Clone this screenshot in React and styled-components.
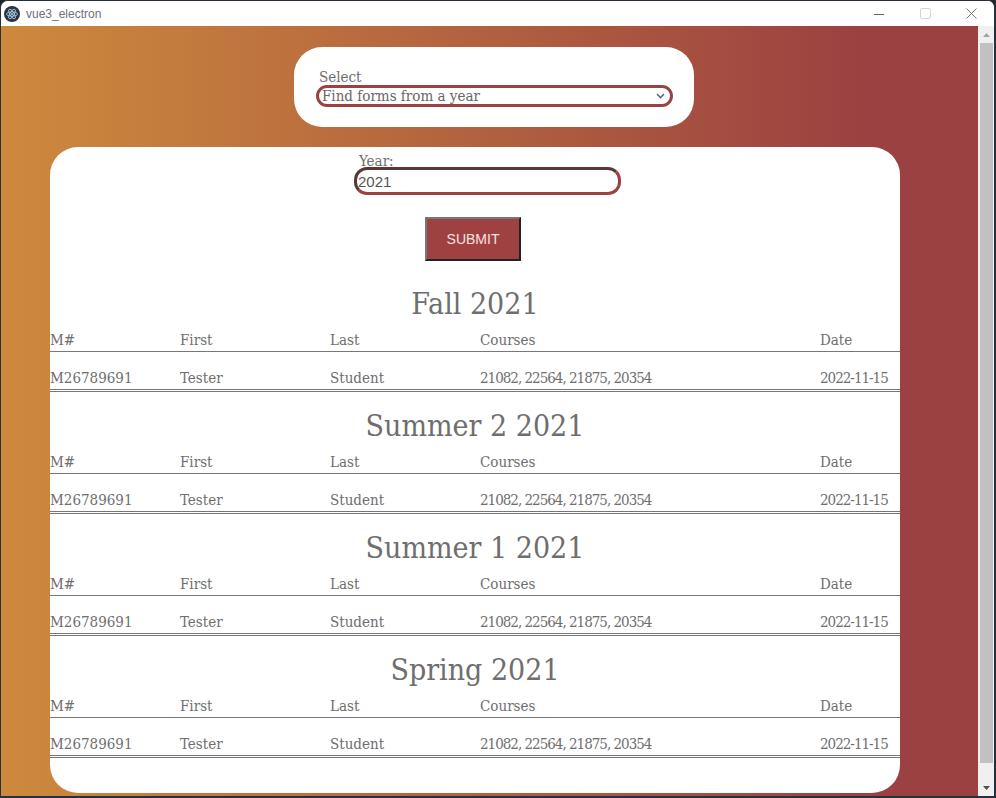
import React from "react";
import styled, { createGlobalStyle } from "styled-components";

const GlobalStyle = createGlobalStyle`
  html, body { margin: 0; padding: 0; width: 100%; height: 100%; overflow: hidden; background: #1f2733; }
  #root { height: 100%; }
  *, *::before, *::after { box-sizing: border-box; }
`;

const SERIF = `"DejaVu Serif Condensed", "DejaVu Serif", "Liberation Serif", serif`;
const TEXT = "#6e6e6e";

const Window = styled.div`
  width: 996px;
  height: 798px;
  display: flex;
  flex-direction: column;
  border: 1px solid #27303d;
  border-right-width: 2px;
  border-bottom-width: 2px;
  border-radius: 8px 8px 0 0;
  overflow: hidden;
  background: #fff;
`;

const TitleBar = styled.div`
  height: 25px;
  flex: none;
  display: flex;
  align-items: center;
  background: #fff;
  padding-left: 3px;
`;

const Title = styled.span`
  margin-left: 6px;
  font-family: "Segoe UI", "Liberation Sans", sans-serif;
  font-size: 12px;
  color: #6f6f78;
`;

const Controls = styled.div`
  margin-left: auto;
  display: flex;
  height: 100%;
`;

const WinButton = styled.div`
  width: 46px;
  height: 100%;
  display: flex;
  align-items: center;
  justify-content: center;
`;

const Body = styled.div`
  flex: 1;
  min-height: 0;
  display: flex;
`;

const Viewport = styled.div`
  flex: 1;
  overflow: hidden;
  background: linear-gradient(to right, #cd8a3d 0%, #9c4141 88%);
  padding-top: 21px;
`;

const Scrollbar = styled.div`
  width: 16px;
  flex: none;
  background: #f0f0f0;
  display: flex;
  flex-direction: column;
`;

const ScrollArrow = styled.div`
  height: 17px;
  flex: none;
  display: flex;
  align-items: center;
  justify-content: center;
  padding-left: 1px;
`;

const Thumb = styled.div`
  height: 720px;
  flex: none;
  margin: 0 1px 0 2px;
  background: #c1c1c1;
`;

const Track = styled.div`
  flex: 1;
`;

const SelectCard = styled.div`
  margin-left: 293px;
  width: 400px;
  height: 80px;
  background: #fff;
  border-radius: 28px;
  padding: 21px 22px 20px;
`;

const FieldLabel = styled.label`
  display: block;
  font-family: ${SERIF};
  font-size: 15px;
  line-height: ${(p) => p.$lh || 17}px;
  color: ${TEXT};
  padding-left: ${(p) => p.$indent || 3}px;
  padding-top: ${(p) => p.$top || 0}px;
`;

const SelectWrap = styled.div`
  position: relative;
  width: 357px;
`;

const Select = styled.select`
  appearance: none;
  -webkit-appearance: none;
  display: block;
  width: 100%;
  height: 22px;
  border: 3px solid #9c4141;
  border-radius: 11px;
  background: #fff;
  font-family: ${SERIF};
  font-size: 15px;
  line-height: 16px;
  color: #666;
  padding: 0 0 0 3px;
  outline: none;
`;

const Chevron = styled.svg`
  position: absolute;
  right: 8px;
  top: 8px;
  pointer-events: none;
`;

const MainCard = styled.div`
  margin: 20px 0 0 49px;
  width: 850px;
  height: 646px;
  background: #fff;
  border-radius: 28px;
  display: flex;
  flex-direction: column;
  align-items: flex-start;
  padding-top: 5px;
`;

const YearBlock = styled.div`
  margin-left: 304px;
  width: 267px;
`;

const YearInput = styled.input`
  display: block;
  width: 267px;
  height: 28px;
  border: 3px solid;
  border-color: #5a3838 #9e4040 #9e4040 #5a3838;
  border-radius: 13px;
  padding: 0 1px;
  font-family: "Liberation Sans", Arial, sans-serif;
  font-size: 15px;
  color: #555;
  background: #fff;
  outline: none;
`;

const SubmitButton = styled.button`
  margin: 22px 0 9px 375px;
  width: 96px;
  height: 44px;
  background: #a04141;
  color: #f5e1e1;
  font-family: "Liberation Sans", Arial, sans-serif;
  font-size: 14px;
  border: 2px solid;
  border-color: #777 #222 #222 #777;
  padding: 0;
`;

const Section = styled.section`
  margin-top: 15px;
  width: 100%;
`;

const SectionTitle = styled.h2`
  margin: 0;
  padding-top: 3px;
  font-family: ${SERIF};
  font-size: 30px;
  line-height: 32px;
  font-weight: normal;
  text-align: center;
  color: ${TEXT};
`;

const Table = styled.table`
  width: 100%;
  table-layout: fixed;
  border-collapse: separate;
  border-spacing: 0;
  font-family: ${SERIF};
  font-size: 15px;
  color: ${TEXT};
`;

const Th = styled.th`
  text-align: left;
  font-weight: normal;
  padding: 11px 0 2px;
  line-height: 18px;
  border-bottom: 1px solid #777;
  white-space: nowrap;
`;

const Td = styled.td`
  padding: 17px 0 2px;
  line-height: 18px;
  border-bottom: 3px double #777;
  white-space: nowrap;
  letter-spacing: ${(p) => (p.$tight ? "-1px" : "normal")};
`;

const sections = ["Fall 2021", "Summer 2 2021", "Summer 1 2021", "Spring 2021"];
const row = {
  id: "M26789691",
  first: "Tester",
  last: "Student",
  courses: "21082, 22564, 21875, 20354",
  date: "2022-11-15",
};

const ElectronIcon = () => (
  <svg width="16" height="16" viewBox="0 0 16 16">
    <circle cx="8" cy="8" r="8" fill="#2f3242" />
    <g fill="none" stroke="#a8dcef" strokeWidth="0.8">
      <ellipse cx="8" cy="8" rx="5.4" ry="2.1" />
      <ellipse cx="8" cy="8" rx="5.4" ry="2.1" transform="rotate(60 8 8)" />
      <ellipse cx="8" cy="8" rx="5.4" ry="2.1" transform="rotate(-60 8 8)" />
    </g>
    <circle cx="8" cy="8" r="1" fill="#a8dcef" />
  </svg>
);

export default function App() {
  return (
    <>
      <GlobalStyle />
      <Window>
        <TitleBar>
          <ElectronIcon />
          <Title>vue3_electron</Title>
          <Controls>
            <WinButton>
              <svg width="10" height="10" viewBox="0 0 10 10">
                <line x1="0" y1="5.5" x2="10" y2="5.5" stroke="#666" strokeWidth="1" />
              </svg>
            </WinButton>
            <WinButton>
              <svg width="11" height="11" viewBox="0 0 11 11">
                <rect x="0.5" y="0.5" width="10" height="10" rx="1.5" fill="none" stroke="#d4d4d4" strokeWidth="1" />
              </svg>
            </WinButton>
            <WinButton>
              <svg width="11" height="11" viewBox="0 0 11 11">
                <path d="M0.5 0.5L10.5 10.5M10.5 0.5L0.5 10.5" stroke="#666" strokeWidth="0.9" />
              </svg>
            </WinButton>
          </Controls>
        </TitleBar>
        <Body>
          <Viewport>
            <SelectCard>
              <FieldLabel htmlFor="mode" $top={1} $lh={16}>Select</FieldLabel>
              <SelectWrap>
                <Select id="mode" defaultValue="year">
                  <option value="year">Find forms from a year</option>
                </Select>
                <Chevron width="9" height="6" viewBox="0 0 9 6">
                  <path d="M1 1l3.5 3.5L8 1" stroke="#666" strokeWidth="1.6" fill="none" />
                </Chevron>
              </SelectWrap>
            </SelectCard>
            <MainCard>
              <YearBlock>
                <FieldLabel htmlFor="year" $top={3} $lh={12} $indent={5}>Year:</FieldLabel>
                <YearInput id="year" defaultValue="2021" />
              </YearBlock>
              <SubmitButton>SUBMIT</SubmitButton>
              {sections.map((name) => (
                <Section key={name}>
                  <SectionTitle>{name}</SectionTitle>
                  <Table>
                    <colgroup>
                      <col style={{ width: 130 }} />
                      <col style={{ width: 150 }} />
                      <col style={{ width: 150 }} />
                      <col style={{ width: 340 }} />
                      <col />
                    </colgroup>
                    <thead>
                      <tr>
                        <Th>M#</Th>
                        <Th>First</Th>
                        <Th>Last</Th>
                        <Th>Courses</Th>
                        <Th>Date</Th>
                      </tr>
                    </thead>
                    <tbody>
                      <tr>
                        <Td>{row.id}</Td>
                        <Td>{row.first}</Td>
                        <Td>{row.last}</Td>
                        <Td $tight>{row.courses}</Td>
                        <Td $tight>{row.date}</Td>
                      </tr>
                    </tbody>
                  </Table>
                </Section>
              ))}
            </MainCard>
          </Viewport>
          <Scrollbar>
            <ScrollArrow>
              <svg width="7" height="4" viewBox="0 0 7 4"><path d="M0 4L3.5 0L7 4Z" fill="#a3a3a3" /></svg>
            </ScrollArrow>
            <Thumb />
            <Track />
            <ScrollArrow>
              <svg width="7" height="4" viewBox="0 0 7 4"><path d="M0 0L3.5 4L7 0Z" fill="#505050" /></svg>
            </ScrollArrow>
          </Scrollbar>
        </Body>
      </Window>
    </>
  );
}
